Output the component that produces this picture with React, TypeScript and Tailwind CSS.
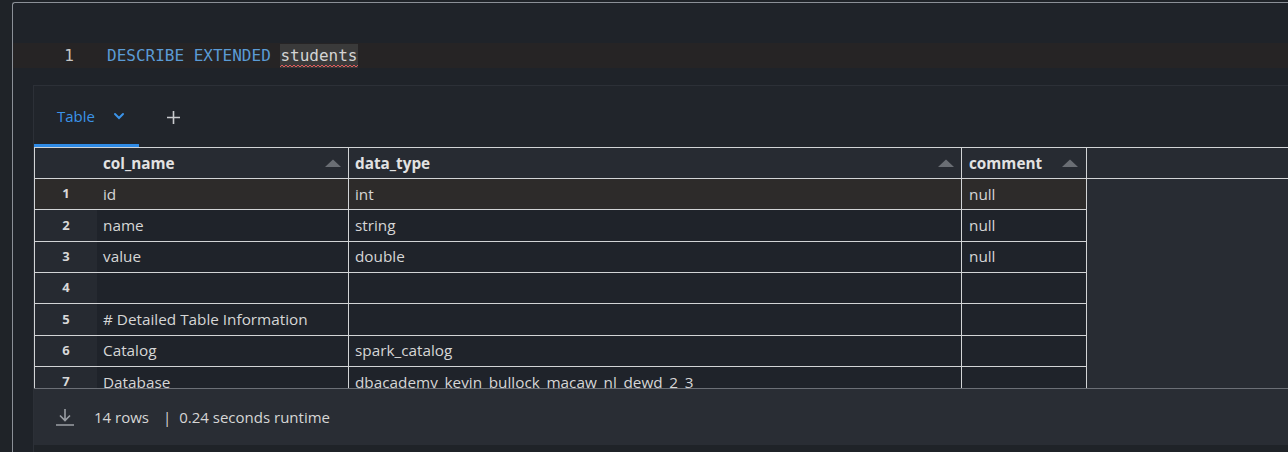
import React from "react";

const rows: [string, string, string, string][] = [
  ["1", "id", "int", "null"],
  ["2", "name", "string", "null"],
  ["3", "value", "double", "null"],
  ["4", "", "", ""],
  ["5", "# Detailed Table Information", "", ""],
  ["6", "Catalog", "spark_catalog", ""],
  ["7", "Database", "dbacademy_kevin_bullock_macaw_nl_dewd_2_3", ""],
];

function SortUp() {
  return (
    <svg width="18" height="10" viewBox="0 0 18 10" className="shrink-0">
      <path d="M1 9 L9 1.5 L17 9 Z" fill="#6a6e74" />
    </svg>
  );
}

export default function App() {
  return (
    <div
      className="w-[1288px] h-[452px] bg-[#1f2328] overflow-hidden flex"
      style={{ fontFamily: '"Open Sans", "Noto Sans", sans-serif' }}
    >
      <div className="w-[12px] shrink-0" />
      <div className="flex-1 mt-[2px] border-l border-t border-[#8b9097] rounded-tl-[3px] flex flex-col bg-[#1f2329]">
        <div className="h-[40px]" />
        {/* code line */}
        <div className="h-[25px] bg-[#262425] flex items-center">
          <div className="w-[61px] text-right text-[#c6c6c6] text-[16px] font-['DejaVu_Sans_Mono',monospace]">
            1
          </div>
          <div className="ml-[33px] text-[16px] font-['DejaVu_Sans_Mono',monospace] whitespace-pre flex">
            <span className="text-[#5b9bd5]">DESCRIBE EXTENDED </span>
            <span className="relative text-[#d4d4d4] bg-[#3a3a3a] leading-[23px] pr-[1px]">
              students
              <svg className="absolute left-0 bottom-[0px]" width="78" height="4" viewBox="0 0 78 4">
                <path
                  d="M0 3 L2 1 L4 3 L6 1 L8 3 L10 1 L12 3 L14 1 L16 3 L18 1 L20 3 L22 1 L24 3 L26 1 L28 3 L30 1 L32 3 L34 1 L36 3 L38 1 L40 3 L42 1 L44 3 L46 1 L48 3 L50 1 L52 3 L54 1 L56 3 L58 1 L60 3 L62 1 L64 3 L66 1 L68 3 L70 1 L72 3 L74 1 L76 3 L78 1"
                  fill="none"
                  stroke="#e05c5c"
                  strokeWidth="1"
                />
              </svg>
            </span>
          </div>
        </div>
        <div className="h-[17px]" />
        {/* result panel */}
        <div className="ml-[20px] flex-1 flex flex-col bg-[#21252b] border-t border-l border-[#2c3037]">
          {/* tab bar */}
          <div className="h-[61px] flex items-end">
            <div className="w-[105px] h-[61px] flex items-center pl-[23px] border-b-[3px] border-[#2f8be6]">
              <span className="text-[#3b93e8] text-[15px] mt-[3px]">Table</span>
              <svg className="ml-[18px] mt-[2px]" width="12" height="8" viewBox="0 0 12 8">
                <path d="M2 2 L6 6 L10 2" fill="none" stroke="#3b93e8" strokeWidth="2" strokeLinecap="round" />
              </svg>
            </div>
            <div className="h-[61px] flex items-center ml-[27px]">
              <svg className="mt-[1px]" width="15" height="15" viewBox="0 0 15 15">
                <path d="M7.5 1 V14 M1 7.5 H14" stroke="#c9cbce" strokeWidth="1.6" />
              </svg>
            </div>
          </div>
          {/* table */}
          <div className="h-[241px] overflow-hidden bg-[#282c33] border-t border-[#d2d4d6] text-[15.3px] text-[#d6d6d6]">
            {/* header */}
            <div className="h-[31px] flex border-b border-[#d2d4d6]">
              <div className="w-[63px] shrink-0 bg-[#272b32] border-l border-[#d2d4d6]" />
              <div className="w-[252px] shrink-0 bg-[#272b32] flex items-center justify-between pl-[6px] pr-[6px] border-r border-[#d2d4d6]">
                <span className="font-bold text-[#e2e2e2]">col_name</span>
                <SortUp />
              </div>
              <div className="w-[613px] shrink-0 bg-[#272b32] flex items-center justify-between pl-[6px] pr-[6px] border-r border-[#d2d4d6]">
                <span className="font-bold text-[#e2e2e2]">data_type</span>
                <SortUp />
              </div>
              <div className="w-[125px] shrink-0 bg-[#272b32] flex items-center justify-between pl-[7px] pr-[7px] border-r border-[#d2d4d6]">
                <span className="font-bold text-[#e2e2e2]">comment</span>
                <SortUp />
              </div>
              <div className="flex-1 bg-[#272b32]" />
            </div>
            {rows.map((r, i) => {
              const hl = i === 0;
              const cell = hl ? "bg-[#2d2b2a]" : "bg-[#1f232a]";
              const idx = hl ? "bg-[#2d2b2a]" : "bg-[#262a31]";
              return (
                <div key={i} className="h-[31.33px] flex">
                  <div className={`w-[63px] shrink-0 border-l border-b border-[#d2d4d6] flex items-center justify-center text-[13px] font-bold text-[#d8d8d8] ${idx}`}>
                    {r[0]}
                  </div>
                  <div className={`w-[252px] shrink-0 border-b border-r border-[#d2d4d6] flex items-center pl-[6px] whitespace-nowrap ${cell}`}>
                    {r[1]}
                  </div>
                  <div className={`w-[613px] shrink-0 border-b border-r border-[#d2d4d6] flex items-center pl-[6px] whitespace-nowrap ${cell}`}>
                    {r[2]}
                  </div>
                  <div className={`w-[125px] shrink-0 border-b border-r border-[#d2d4d6] flex items-center pl-[7px] whitespace-nowrap ${cell}`}>
                    {r[3]}
                  </div>
                </div>
              );
            })}
          </div>
          {/* footer */}
          <div className="h-[57px] bg-[#292d34] border-t border-[#6b6f76] flex items-center text-[15px] text-[#d6d6d6]">
            <svg className="ml-[21px]" width="20" height="20" viewBox="0 0 20 20">
              <path d="M10 2 V13 M5 8.5 L10 13.5 L15 8.5 M1 18 H19" fill="none" stroke="#9a9ea4" strokeWidth="1.6" />
            </svg>
            <span className="ml-[19px]">14 rows</span>
            <span className="ml-[14px] mr-[8px]">|</span>
            <span>0.24 seconds runtime</span>
          </div>
          <div className="flex-1 bg-[#1f2328]" />
        </div>
      </div>
    </div>
  );
}
